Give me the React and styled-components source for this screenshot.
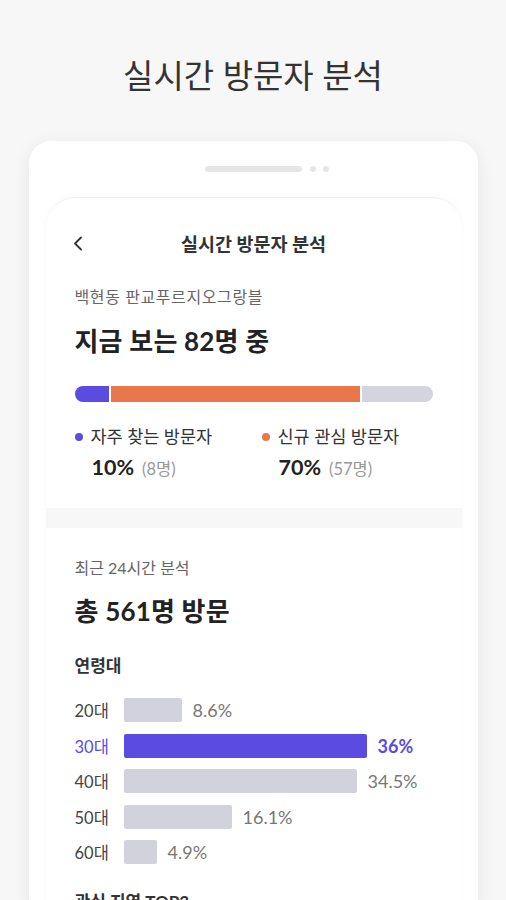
import React from "react";
import styled, { createGlobalStyle } from "styled-components";

const GlobalStyle = createGlobalStyle`
  html, body {
    margin: 0;
    background: #f7f7f7;
    font-family: "Lato", "Noto Sans CJK KR", sans-serif;
    color: #333;
    overflow: hidden;
  }
`;

const ages = [
  { label: "20대", value: "8.6%", width: 58 },
  { label: "30대", value: "36%", width: 243, active: true },
  { label: "40대", value: "34.5%", width: 233 },
  { label: "50대", value: "16.1%", width: 108 },
  { label: "60대", value: "4.9%", width: 33 },
];

function App() {
  return (
    <Page>
      <GlobalStyle />
      <PageTitle>실시간 방문자 분석</PageTitle>
      <Phone>
        <Notch>
          <Speaker />
          <Dot />
          <Dot />
        </Notch>
        <Screen>
          <Header>
            <Back>
              <svg width="10" height="15" viewBox="0 0 10 15">
                <polyline
                  points="8,1.5 2,7.5 8,13.5"
                  fill="none"
                  stroke="#333"
                  strokeWidth="1.8"
                  strokeLinecap="round"
                  strokeLinejoin="round"
                />
              </svg>
            </Back>
            <HeaderTitle>실시간 방문자 분석</HeaderTitle>
          </Header>

          <Section>
            <Sub $spacing={0.6}>백현동 판교푸르지오그랑블</Sub>
            <Big>지금 보는 82명 중</Big>
            <Stack>
              <Seg color="#5a4ce0" style={{ width: 34 }} />
              <Seg color="#e8784c" style={{ width: 249 }} />
              <Seg color="#d4d4de" style={{ flex: 1 }} />
            </Stack>
            <Legend>
              <LegendItem>
                <Label>
                  <Bullet color="#5a4ce0" />
                  자주 찾는 방문자
                </Label>
                <Value>
                  10%<Count>(8명)</Count>
                </Value>
              </LegendItem>
              <LegendItem>
                <Label>
                  <Bullet color="#e8784c" />
                  신규 관심 방문자
                </Label>
                <Value>
                  70%<Count>(57명)</Count>
                </Value>
              </LegendItem>
            </Legend>
          </Section>

          <Divider />

          <Section>
            <Sub $top={30}>최근 24시간 분석</Sub>
            <Big $top={18}>총 561명 방문</Big>
            <SmallHead>연령대</SmallHead>
            <Bars>
              {ages.map((a) => (
                <AgeRow key={a.label}>
                  <AgeLabel $active={a.active}>{a.label}</AgeLabel>
                  <Bar $active={a.active} style={{ width: a.width }} />
                  <AgeValue $active={a.active}>{a.value}</AgeValue>
                </AgeRow>
              ))}
            </Bars>
            <SmallHead $top={27}>관심 지역 TOP3</SmallHead>
          </Section>
        </Screen>
      </Phone>
    </Page>
  );
}

const Page = styled.div`
  height: 900px;
  display: flex;
  flex-direction: column;
  align-items: center;
  padding-top: 55px;
  box-sizing: border-box;
`;

const PageTitle = styled.h1`
  margin: 0;
  font-size: 33px;
  line-height: 40px;
  font-weight: 400;
  color: #333;
`;

const Phone = styled.div`
  margin-top: 46px;
  width: 449px;
  flex: 1;
  background: #fff;
  border-radius: 22px 22px 0 0;
  box-shadow: 0 4px 18px rgba(0, 0, 0, 0.07);
  padding-top: 25px;
  box-sizing: border-box;
  display: flex;
  flex-direction: column;
`;

const Notch = styled.div`
  display: flex;
  justify-content: center;
  align-items: center;
  gap: 7px;
  padding-left: 28px;
`;

const Speaker = styled.div`
  width: 97px;
  height: 6px;
  border-radius: 3px;
  background: #e6e6e6;
  margin-right: 1px;
`;

const Dot = styled.div`
  width: 6px;
  height: 6px;
  border-radius: 50%;
  background: #e6e6e6;
`;

const Screen = styled.div`
  margin: 25px 16px 0 17px;
  flex: 1;
  border-radius: 30px 30px 0 0;
  border-top: 1px solid #f1f1f1;
  box-shadow: 0 -2px 6px rgba(0, 0, 0, 0.025);
  overflow: hidden;
`;

const Header = styled.div`
  position: relative;
  margin-top: 22px;
  height: 46px;
  display: flex;
  align-items: center;
  justify-content: center;
`;

const Back = styled.div`
  position: absolute;
  left: 27px;
  top: 16px;
  display: flex;
`;

const HeaderTitle = styled.div`
  font-size: 18.5px;
  font-weight: 700;
  color: #333;
`;

const Section = styled.div`
  padding: 0 29px;
  display: flex;
  flex-direction: column;
`;

const Sub = styled.div`
  margin-top: ${(p) => p.$top ?? 21}px;
  font-size: 16px;
  line-height: 20px;
  letter-spacing: ${(p) => p.$spacing ?? 0}px;
  color: #666;
`;

const Big = styled.div`
  margin-top: ${(p) => p.$top ?? 19}px;
  font-size: 26px;
  line-height: 30px;
  font-weight: 700;
  letter-spacing: 0.2px;
  color: #222;
`;

const Stack = styled.div`
  margin-top: 30px;
  height: 16px;
  display: flex;
  gap: 2px;
  border-radius: 8px;
  overflow: hidden;
`;

const Seg = styled.div`
  background: ${(p) => p.color};
  height: 100%;
`;

const Legend = styled.div`
  margin-top: 24px;
  display: grid;
  grid-template-columns: 187px 1fr;
`;

const LegendItem = styled.div`
  display: flex;
  flex-direction: column;
  gap: 6px;
`;

const Label = styled.div`
  display: flex;
  align-items: center;
  gap: 8px;
  font-size: 17.5px;
  line-height: 22px;
  color: #333;
`;

const Bullet = styled.span`
  width: 8px;
  height: 8px;
  border-radius: 50%;
  background: ${(p) => p.color};
`;

const Value = styled.div`
  padding-left: 17px;
  font-size: 21.5px;
  line-height: 26px;
  font-weight: 700;
  color: #222;
`;

const Count = styled.span`
  margin-left: 8px;
  font-size: 16.5px;
  font-weight: 400;
  color: #999;
`;

const Divider = styled.div`
  margin-top: 26px;
  height: 20px;
  background: #f7f7f7;
`;

const SmallHead = styled.div`
  margin-top: ${(p) => p.$top ?? 29}px;
  font-size: 17px;
  line-height: 22px;
  font-weight: 700;
  color: #333;
  white-space: nowrap;
`;

const Bars = styled.div`
  margin-top: 21px;
  display: flex;
  flex-direction: column;
  gap: 11.5px;
`;

const AgeRow = styled.div`
  display: flex;
  align-items: center;
  height: 24px;
`;

const AgeLabel = styled.div`
  width: 49px;
  font-size: 16.5px;
  color: ${(p) => (p.$active ? "#5a4ce0" : "#444")};
`;

const Bar = styled.div`
  height: 24px;
  border-radius: 2px;
  background: ${(p) => (p.$active ? "#5a4ce0" : "#d2d2dd")};
`;

const AgeValue = styled.div`
  margin-left: 11px;
  font-size: 18px;
  font-weight: ${(p) => (p.$active ? 700 : 400)};
  color: ${(p) => (p.$active ? "#5a4ce0" : "#777")};
`;

export default App;
